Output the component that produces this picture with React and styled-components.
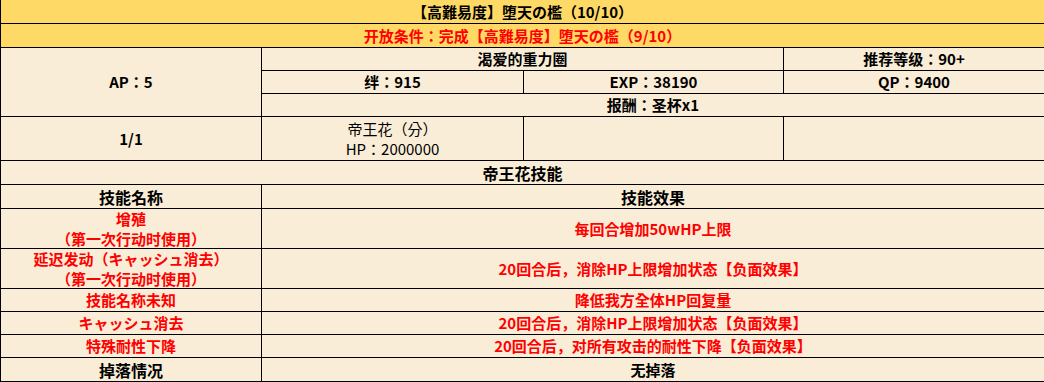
import React from "react";
import styled, { createGlobalStyle } from "styled-components";

const GlobalStyle = createGlobalStyle`
  html, body {
    margin: 0;
    padding: 0;
    overflow: hidden;
    background: #ffffff;
  }
`;

const skills = [
  { name: ["增殖", "（第一次行动时使用）"], effect: "每回合增加50wHP上限" },
  {
    name: ["延迟发动（キャッシュ消去）", "（第一次行动时使用）"],
    effect: "20回合后，消除HP上限增加状态【负面效果】",
  },
  { name: ["技能名称未知"], effect: "降低我方全体HP回复量" },
  { name: ["キャッシュ消去"], effect: "20回合后，消除HP上限增加状态【负面效果】" },
  { name: ["特殊耐性下降"], effect: "20回合后，对所有攻击的耐性下降【负面效果】" },
];

const App = () => {
  return (
    <>
      <GlobalStyle />
      <Sheet>
        <Cell $span={4} $yellow>
          【高難易度】堕天の檻（10/10）
        </Cell>
        <Cell $span={4} $yellow $red>
          开放条件：完成【高難易度】堕天の檻（9/10）
        </Cell>

        <Cell $rows={3}>AP：5</Cell>
        <Cell $span={2}>渴爱的重力圈</Cell>
        <Cell>推荐等级：90+</Cell>
        <Cell>绊：915</Cell>
        <Cell>EXP：38190</Cell>
        <Cell>QP：9400</Cell>
        <Cell $span={3}>报酬：圣杯x1</Cell>

        <Cell>1/1</Cell>
        <Cell $light>
          <span>帝王花（分）</span>
          <span>HP：2000000</span>
        </Cell>
        <Cell />
        <Cell />

        <Cell $span={4} $head>
          帝王花技能
        </Cell>
        <Cell $head>技能名称</Cell>
        <Cell $span={3} $head>
          技能效果
        </Cell>

        {skills.map((s, i) => (
          <React.Fragment key={i}>
            <Cell $red>
              {s.name.map((line, j) => (
                <span key={j}>{line}</span>
              ))}
            </Cell>
            <Cell $span={3} $red>
              {s.effect}
            </Cell>
          </React.Fragment>
        ))}

        <Cell $head>掉落情况</Cell>
        <Cell $span={3}>无掉落</Cell>
      </Sheet>
    </>
  );
};

export default App;

const Sheet = styled.div`
  display: grid;
  grid-template-columns: 260px 261px 259px 260px;
  grid-template-rows: 23px 23px 22px 22px 22px 43px 23px 23px 39px 39px 22px 22px 22px 23px;
  gap: 1px;
  padding: 1px;
  margin-top: -1px;
  width: 1045px;
  box-sizing: border-box;
  background: #000000;
  font-family: "Noto Sans CJK KR", "Noto Sans CJK SC", "Microsoft YaHei", sans-serif;
  text-spacing-trim: space-all;
`;

const Cell = styled.div`
  grid-column: span ${(p) => p.$span || 1};
  grid-row: span ${(p) => p.$rows || 1};
  display: flex;
  flex-direction: column;
  align-items: center;
  justify-content: center;
  text-align: center;
  background: ${(p) => (p.$yellow ? "#ffd966" : "#f9edd7")};
  color: ${(p) => (p.$red ? "#ff0000" : "#000000")};
  font-size: ${(p) => (p.$head ? "16px" : "15px")};
  font-weight: ${(p) => (p.$light ? 400 : 700)};
  line-height: 20px;
  white-space: nowrap;
`;
